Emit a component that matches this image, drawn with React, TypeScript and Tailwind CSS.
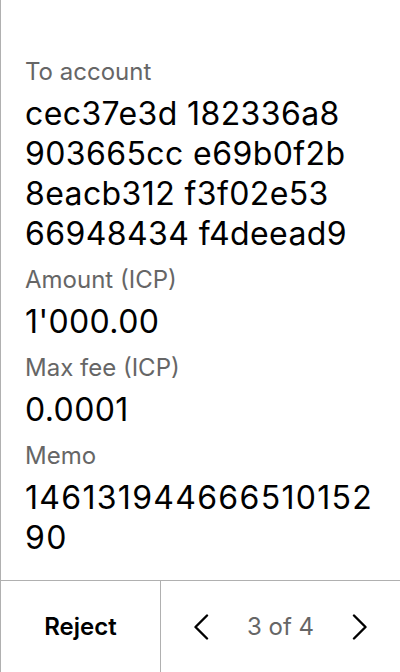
import React from "react";

const Field = ({ label, value, valueClass = "tracking-[0.4px]" }: { label: string; value: React.ReactNode; valueClass?: string }) => (
  <div className="flex flex-col gap-[6px] mb-[10px]">
    <div className="text-[24px] leading-[32px] text-[#666666]">{label}</div>
    <div className={`text-[32px] leading-[40px] text-black break-all ${valueClass}`}>{value}</div>
  </div>
);

export default function App() {
  return (
    <div
      className="w-[400px] h-[672px] flex flex-col bg-white border-l border-[#b0b0b0]"
      style={{ fontFamily: "Inter, 'Noto Sans', sans-serif" }}
    >
      <div className="flex-1 pt-[56px] pl-[24px] pr-[24px]">
        <Field
          label="To account"
          value={
            <>
              <div>cec37e3d 182336a8</div>
              <div>903665cc e69b0f2b</div>
              <div>8eacb312 f3f02e53</div>
              <div>66948434 f4deead9</div>
            </>
          }
        />
        <Field label="Amount (ICP)" value="1'000.00" />
        <Field label="Max fee (ICP)" value="0.0001" />
        <Field label="Memo" value="14613194466651015290" valueClass="tracking-[1.3px]" />
      </div>
      <div className="h-[92px] flex border-t border-[#b0b0b0]">
        <button className="w-[159px] flex items-center justify-center text-[24px] font-semibold text-black">
          Reject
        </button>
        <div className="flex-1 flex items-center justify-between border-l border-[#b0b0b0] pl-[32px] pr-[32px]">
          <svg width="16" height="26" viewBox="0 0 16 26" fill="none">
            <path d="M14 1.5 L2.5 13 L14 24.5" stroke="black" strokeWidth="2.4" strokeLinecap="round" strokeLinejoin="round" />
          </svg>
          <span className="text-[24px] text-[#666666]">3 of 4</span>
          <svg width="16" height="26" viewBox="0 0 16 26" fill="none">
            <path d="M2 1.5 L13.5 13 L2 24.5" stroke="black" strokeWidth="2.4" strokeLinecap="round" strokeLinejoin="round" />
          </svg>
        </div>
      </div>
    </div>
  );
}
